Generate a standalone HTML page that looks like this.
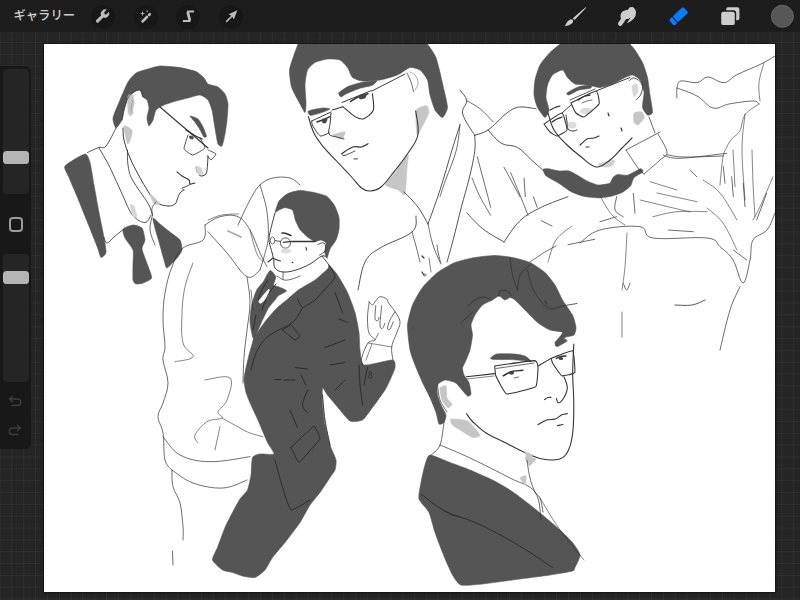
<!DOCTYPE html>
<html lang="ja">
<head>
<meta charset="utf-8">
<title>Procreate</title>
<style>
html,body{margin:0;padding:0;width:800px;height:600px;overflow:hidden;background:#232323;}
body{position:relative;font-family:"Liberation Sans","Noto Sans CJK JP",sans-serif;}
#bg{position:absolute;left:0;top:0;width:800px;height:600px;
 background-color:#232323;
 background-image:
  linear-gradient(to right, rgba(255,255,255,0.038) 1.2px, transparent 1.2px),
  linear-gradient(to bottom, rgba(255,255,255,0.038) 1.2px, transparent 1.2px),
  linear-gradient(to right, rgba(255,255,255,0.012) 1px, transparent 1px),
  linear-gradient(to bottom, rgba(255,255,255,0.012) 1px, transparent 1px);
 background-size:11.855px 11.855px,11.855px 11.855px,2.371px 2.371px,2.371px 2.371px;
 background-position:-0.4px 6.4px,-0.4px 6.4px,-0.4px 6.4px,-0.4px 6.4px;}
#topbar{position:absolute;left:0;top:0;width:800px;height:32px;background:#1d1d1d;}
#gallery{position:absolute;left:13.5px;top:0;height:32px;line-height:32px;color:#cfcfcf;font-size:12.3px;font-weight:500;letter-spacing:0px;}
.circ{position:absolute;top:4.5px;width:24px;height:24px;border-radius:50%;background:#171717;filter:blur(0.6px);}
.ico{position:absolute;top:0;}
#canvas{position:absolute;left:44px;top:44px;width:731px;height:548px;background:#fff;box-shadow:0 0 2px 1px rgba(0,0,0,0.55);}
#side{position:absolute;left:0;top:65.5px;width:31px;height:383.5px;background:#181818;border-radius:0 6px 6px 0;}
.track{position:absolute;left:2.5px;width:26.5px;background:#252525;border-radius:4px;}
.knob{position:absolute;left:2.5px;width:26px;height:12.5px;background:#b5b5b5;border-radius:3.5px;}
#sq{position:absolute;left:8.5px;top:217px;width:10.5px;height:10.5px;border:2px solid #9c9c9c;border-radius:4px;}
#art{position:absolute;left:0;top:0;width:800px;height:600px;}
</style>
</head>
<body>
<div id="bg"></div>
<div id="canvas"></div>
<svg id="art" viewBox="0 0 800 600">
<!--ART-->
<defs><clipPath id="cv"><rect x="44" y="44" width="731" height="548"/></clipPath></defs><g clip-path="url(#cv)">
<path d="M113.0 118.0C113.4 115.2 118.5 103.6 120.0 100.0C121.5 96.4 126.4 84.7 128.0 82.0C129.6 79.3 134.0 74.3 136.0 73.0C138.0 71.7 145.6 69.7 148.0 69.0C150.4 68.3 156.8 66.1 160.0 66.0C163.2 65.9 176.4 67.0 180.0 67.6C183.6 68.2 193.6 70.6 196.0 71.6C198.4 72.6 202.8 76.8 204.0 78.0C205.2 79.2 206.6 83.1 208.0 84.0C209.4 84.9 216.3 86.0 218.0 87.0C219.7 88.0 224.0 92.3 225.0 94.0C226.0 95.7 227.8 101.4 228.0 104.0C228.2 106.6 227.3 117.0 227.0 120.0C226.7 123.0 225.5 131.4 225.0 134.0C224.5 136.6 222.7 145.0 222.0 146.0C221.3 147.0 218.6 145.2 218.0 144.0C217.4 142.8 216.4 136.2 216.0 134.0C215.6 131.8 214.4 124.4 214.0 122.0C213.6 119.6 212.6 112.2 212.0 110.0C211.4 107.8 209.2 101.5 208.0 100.0C206.8 98.5 202.0 95.2 200.0 95.0C198.0 94.8 190.4 97.4 188.0 98.0C185.6 98.6 178.4 100.3 176.0 101.0C173.6 101.7 166.0 104.1 164.0 105.0C162.0 105.9 157.1 108.5 156.0 110.0C154.9 111.5 153.7 118.4 153.0 120.0C152.3 121.6 149.6 126.2 149.0 126.0C148.4 125.8 147.0 119.8 147.0 118.0C147.0 116.2 149.0 109.8 149.0 108.0C149.0 106.2 147.6 101.1 147.0 100.0C146.4 98.9 143.7 98.0 143.0 97.0C142.3 96.0 140.9 90.5 140.0 90.0C139.1 89.5 135.2 91.2 134.0 92.0C132.8 92.8 129.0 96.2 128.0 98.0C127.0 99.8 124.6 107.8 124.0 110.0C123.4 112.2 122.8 118.2 122.0 120.0C121.2 121.8 116.9 128.2 116.0 128.0C115.1 127.8 112.6 120.8 113.0 118.0Z" fill="#555555" stroke="#555555" stroke-width="0.6" stroke-linejoin="round" />
<path d="M190.0 116.0C190.4 115.8 196.7 117.9 198.0 119.0C199.3 120.1 202.2 125.3 203.0 127.0C203.8 128.7 206.4 135.0 206.5 136.0C206.6 137.0 204.8 137.8 204.0 137.0C203.2 136.2 200.0 129.6 199.0 128.0C198.0 126.4 194.9 122.2 194.0 121.0C193.1 119.8 189.6 116.2 190.0 116.0Z" fill="#555555" stroke="#555555" stroke-width="0.6" stroke-linejoin="round" />
<path d="M128.0 96.0C128.5 94.3 132.4 94.2 133.0 95.0C133.6 95.8 134.2 101.9 134.0 104.0C133.8 106.1 131.6 115.2 131.0 116.0C130.4 116.8 128.3 114.0 128.0 112.0C127.7 110.0 127.5 97.7 128.0 96.0Z" fill="#c6c6c6" stroke="#c6c6c6" stroke-width="0.6" stroke-linejoin="round" />
<path d="M124.0 126.0C124.5 124.6 131.3 128.8 132.0 130.0C132.7 131.2 131.4 136.6 131.0 138.0C130.6 139.4 128.2 145.2 127.5 144.0C126.8 142.8 123.5 127.4 124.0 126.0Z" fill="#c6c6c6" stroke="#c6c6c6" stroke-width="0.6" stroke-linejoin="round" />
<path d="M65.0 166.0C66.6 163.7 82.5 154.3 85.0 154.0C87.5 153.7 89.1 159.4 90.0 162.5C90.9 165.6 93.1 180.0 94.0 185.0C94.9 190.0 98.0 207.2 99.0 212.5C100.0 217.8 103.3 233.5 104.0 237.5C104.7 241.5 106.3 250.5 106.0 252.5C105.7 254.5 101.8 258.0 101.0 257.5C100.2 257.0 98.8 251.0 97.5 247.5C96.2 244.0 89.5 227.5 87.5 222.5C85.5 217.5 79.3 202.0 77.5 197.5C75.7 193.0 70.2 180.7 69.0 177.5C67.8 174.3 63.4 168.3 65.0 166.0Z" fill="#555555" stroke="#555555" stroke-width="0.6" stroke-linejoin="round" />
<path d="M123.0 229.0C123.8 227.7 131.1 225.1 133.0 225.0C134.9 224.9 140.8 226.5 142.0 228.0C143.2 229.5 145.0 237.9 145.0 240.0C145.0 242.1 141.7 246.4 142.0 249.0C142.3 251.6 147.0 263.1 148.0 266.0C149.0 268.9 152.1 276.3 151.6 278.0C151.1 279.7 144.6 282.4 143.0 283.0C141.4 283.6 137.0 284.3 136.0 284.0C135.0 283.7 133.3 282.0 133.0 280.0C132.7 278.0 133.0 267.0 133.0 264.0C133.0 261.0 133.8 252.6 133.0 250.0C132.2 247.4 126.0 240.1 125.0 238.0C124.0 235.9 122.2 230.3 123.0 229.0Z" fill="#555555" stroke="#555555" stroke-width="0.6" stroke-linejoin="round" />
<path d="M153.0 218.0C153.5 217.6 158.3 222.6 160.0 224.0C161.7 225.4 168.0 230.4 170.0 232.0C172.0 233.6 178.8 238.2 180.0 240.0C181.2 241.8 182.3 248.2 182.0 250.0C181.7 251.8 178.5 256.2 177.0 258.0C175.5 259.8 168.3 267.8 167.0 268.0C165.7 268.2 164.8 262.6 164.0 260.0C163.2 257.4 159.9 245.2 159.0 242.0C158.1 238.8 155.6 230.4 155.0 228.0C154.4 225.6 152.5 218.4 153.0 218.0Z" fill="#555555" stroke="#555555" stroke-width="0.6" stroke-linejoin="round" />
<path d="M160.0 107.0 L208.0 148.0" fill="none" stroke="#333333" stroke-width="1.08" stroke-linecap="round" stroke-linejoin="round"/>
<path d="M188.0 135.0C187.7 135.9 183.7 147.7 184.0 149.0C184.3 150.3 191.6 155.1 193.0 155.0C194.4 154.9 204.5 149.1 205.0 148.0C205.5 146.9 200.3 138.7 200.0 138.0" fill="none" stroke="#333333" stroke-width="0.84" stroke-linecap="round" stroke-linejoin="round"/>
<path d="M208.0 150.0C208.5 150.3 215.8 153.3 216.0 154.0C216.2 154.7 211.6 159.9 211.0 160.0C210.4 160.1 207.8 156.3 207.6 156.0" fill="none" stroke="#333333" stroke-width="0.84" stroke-linecap="round" stroke-linejoin="round"/>
<path d="M186.0 130.0C187.5 130.9 191.1 133.3 194.0 135.0C196.9 136.7 200.5 138.3 202.0 139.0" fill="none" stroke="#333333" stroke-width="1.32" stroke-linecap="round" stroke-linejoin="round"/>
<path d="M189.5 136.0C189.8 135.8 192.7 136.2 193.0 136.5C193.3 136.8 193.3 138.8 193.0 139.0C192.7 139.2 190.3 138.8 190.0 138.5C189.7 138.2 189.2 136.2 189.5 136.0Z" fill="#444" stroke="#444" stroke-width="0.6" stroke-linejoin="round" />
<path d="M208.0 156.0C207.9 157.7 207.7 162.4 207.5 165.0C207.3 167.6 207.3 168.3 207.0 170.0C206.7 171.7 206.9 172.9 206.0 174.0C205.1 175.1 203.3 175.8 202.0 176.0C200.7 176.2 199.6 175.2 199.0 175.0" fill="none" stroke="#333333" stroke-width="0.96" stroke-linecap="round" stroke-linejoin="round"/>
<path d="M196.0 167.0 L197.0 172.0" fill="none" stroke="#333333" stroke-width="0.72" stroke-linecap="round" stroke-linejoin="round"/>
<path d="M196.0 166.0C196.3 165.4 200.3 167.2 201.0 168.0C201.7 168.8 203.3 173.4 203.0 174.0C202.7 174.6 198.7 174.8 198.0 174.0C197.3 173.2 195.7 166.6 196.0 166.0Z" fill="#d2d2d2" stroke="#d2d2d2" stroke-width="0.6" stroke-linejoin="round" />
<path d="M177.0 172.0C177.9 172.7 179.8 174.5 182.0 176.0C184.2 177.5 187.5 178.5 189.0 180.0C190.5 181.5 188.9 183.4 190.0 184.0C191.1 184.6 194.1 183.2 195.0 183.0" fill="none" stroke="#333333" stroke-width="1.08" stroke-linecap="round" stroke-linejoin="round"/>
<path d="M190.0 184.5C189.1 185.0 186.5 186.4 185.0 187.0C183.5 187.6 182.2 187.4 182.0 188.0C181.8 188.6 183.6 189.6 184.0 190.0" fill="none" stroke="#333333" stroke-width="0.84" stroke-linecap="round" stroke-linejoin="round"/>
<path d="M184.0 190.0C183.3 190.6 181.3 191.2 180.0 193.0C178.7 194.8 177.9 198.0 177.0 200.0C176.1 202.0 176.7 202.9 175.0 204.0C173.3 205.1 171.5 206.4 168.0 206.0C164.5 205.6 160.0 205.3 156.0 202.0C152.0 198.7 149.3 193.1 146.0 188.0C142.7 182.9 140.9 179.5 138.0 174.0C135.1 168.5 132.6 164.2 130.0 158.0C127.4 151.8 125.3 145.5 124.0 140.0C122.7 134.5 123.2 130.2 123.0 128.0" fill="none" stroke="#333333" stroke-width="0.96" stroke-linecap="round" stroke-linejoin="round"/>
<path d="M150.0 194.0C150.6 194.0 159.6 202.6 160.0 203.5C160.4 204.4 155.0 204.4 154.0 203.5C153.0 202.6 149.4 194.0 150.0 194.0Z" fill="#c6c6c6" stroke="#c6c6c6" stroke-width="0.6" stroke-linejoin="round" />
<path d="M116.0 128.0C114.2 131.3 109.2 142.4 106.0 146.0C102.8 149.6 102.1 146.3 98.8 147.5C95.4 148.7 89.6 151.6 87.5 152.5" fill="none" stroke="#333333" stroke-width="0.84" stroke-linecap="round" stroke-linejoin="round"/>
<path d="M98.8 147.5C100.8 151.2 105.6 158.8 110.0 167.5C114.4 176.2 118.4 186.3 122.5 195.0C126.6 203.7 128.4 210.0 132.5 215.0C136.6 220.0 141.6 222.5 145.0 222.5C148.4 222.5 149.9 216.4 151.0 215.0" fill="none" stroke="#333333" stroke-width="0.84" stroke-linecap="round" stroke-linejoin="round"/>
<path d="M104.0 237.5C104.5 238.5 105.2 243.1 107.0 243.0C108.8 242.9 111.2 239.4 114.0 237.0C116.8 234.6 120.9 231.3 122.5 230.0" fill="none" stroke="#333333" stroke-width="0.84" stroke-linecap="round" stroke-linejoin="round"/>
<path d="M127.5 150.0C127.6 152.8 127.1 159.5 128.0 165.0C128.9 170.5 128.9 173.1 132.5 180.0C136.1 186.9 143.8 196.1 147.5 202.5C151.2 208.9 151.6 212.7 152.5 215.0" fill="none" stroke="#333333" stroke-width="0.84" stroke-linecap="round" stroke-linejoin="round"/>
<path d="M152.5 215.0C152.0 217.8 149.5 224.5 150.0 230.0C150.5 235.5 154.1 242.2 155.0 245.0" fill="none" stroke="#333333" stroke-width="0.72" stroke-linecap="round" stroke-linejoin="round"/>
<path d="M156.0 202.0C155.3 203.1 152.6 205.6 152.0 208.0C151.4 210.4 152.4 213.7 152.5 215.0" fill="none" stroke="#333333" stroke-width="0.72" stroke-linecap="round" stroke-linejoin="round"/>
<path d="M130.0 205.0C130.1 204.0 133.3 204.8 134.0 206.0C134.7 207.2 137.1 216.0 137.0 217.0C136.9 218.0 133.7 217.2 133.0 216.0C132.3 214.8 129.9 206.0 130.0 205.0Z" fill="#d6d6d6" stroke="#d6d6d6" stroke-width="0.6" stroke-linejoin="round" />
<path d="M122.0 120.0C122.4 118.2 122.9 114.0 124.0 110.0C125.1 106.0 126.2 101.3 128.0 98.0C129.8 94.7 131.8 93.5 134.0 92.0C136.2 90.5 138.3 89.1 140.0 90.0C141.7 90.9 142.4 95.7 143.0 97.0" fill="none" stroke="#333333" stroke-width="0.72" stroke-linecap="round" stroke-linejoin="round"/>
<path d="M133.0 100.0C132.6 101.5 131.0 105.4 131.0 108.0C131.0 110.6 132.6 112.9 133.0 114.0" fill="none" stroke="#888" stroke-width="0.6" stroke-linecap="round" stroke-linejoin="round"/>
<path d="M228.0 231.0 L241.0 237.0" fill="none" stroke="#aaa" stroke-width="1.92" stroke-linecap="round" stroke-linejoin="round"/>
<path d="M275.2 212.2C275.2 211.3 277.7 202.9 279.0 201.0C280.3 199.1 285.9 194.6 288.0 193.5C290.1 192.4 297.3 190.6 300.0 190.5C302.7 190.4 312.3 192.1 315.0 192.7C317.7 193.3 325.1 195.2 327.0 196.5C328.9 197.8 333.3 203.4 334.5 205.5C335.7 207.6 338.6 215.1 339.0 217.5C339.4 219.9 339.3 227.2 339.0 229.5C338.7 231.8 336.9 238.1 336.0 240.0C335.1 241.9 330.9 247.2 330.0 249.0C329.1 250.8 327.5 257.7 327.0 258.0C326.5 258.3 324.8 253.5 324.7 252.0C324.6 250.5 326.4 244.2 326.0 243.0C325.6 241.8 322.1 240.2 321.0 240.0C319.9 239.8 316.4 241.8 315.0 241.5C313.6 241.2 309.0 238.2 307.5 237.0C306.0 235.8 301.2 231.2 300.0 229.5C298.8 227.8 296.2 222.4 295.5 220.5C294.8 218.6 293.6 211.3 292.5 210.0C291.4 208.7 286.4 207.7 285.0 207.7C283.6 207.7 280.0 209.6 279.0 210.0C278.0 210.4 275.2 213.1 275.2 212.2Z" fill="#555555" stroke="#555555" stroke-width="0.6" stroke-linejoin="round" />
<path d="M329.0 265.0C329.9 265.6 335.6 272.2 337.5 275.0C339.4 277.8 345.8 288.8 347.5 292.5C349.2 296.2 353.9 308.5 355.0 312.5C356.1 316.5 358.5 328.8 359.0 332.5C359.5 336.2 359.5 346.8 360.0 350.0C360.5 353.2 360.8 364.0 364.0 365.0C367.2 366.0 389.4 359.8 392.5 360.0C395.6 360.2 395.2 365.5 395.0 367.5C394.8 369.5 391.0 377.8 390.0 380.0C389.0 382.2 386.8 387.2 385.0 390.0C383.2 392.8 374.8 404.5 372.5 407.5C370.2 410.5 364.8 418.6 362.5 420.0C360.2 421.4 352.2 422.0 350.0 421.0C347.8 420.0 342.2 412.6 340.0 410.0C337.8 407.4 329.2 397.2 327.5 395.0C325.8 392.8 323.0 387.0 322.5 388.0C322.0 389.0 322.2 401.3 322.5 405.0C322.8 408.7 324.2 421.0 325.0 425.0C325.8 429.0 328.9 441.5 330.0 445.0C331.1 448.5 335.5 457.5 336.0 460.0C336.5 462.5 335.6 468.2 335.0 470.0C334.4 471.8 331.5 475.2 330.0 477.5C328.5 479.8 322.0 489.8 320.0 492.5C318.0 495.2 312.0 502.0 310.0 505.0C308.0 508.0 302.5 518.8 300.0 522.5C297.5 526.2 287.8 539.0 285.0 542.5C282.2 546.0 274.5 554.8 272.5 557.5C270.5 560.2 266.8 568.0 265.0 570.0C263.2 572.0 257.2 576.9 255.0 577.5C252.8 578.1 244.8 576.5 242.5 576.0C240.2 575.5 234.5 573.1 232.5 572.5C230.5 571.9 224.5 571.2 222.5 570.0C220.5 568.8 213.0 562.2 212.5 560.0C212.0 557.8 216.2 550.8 217.5 547.5C218.8 544.2 223.5 531.0 225.0 527.5C226.5 524.0 231.0 515.4 232.5 512.5C234.0 509.6 238.5 501.2 240.0 499.0C241.5 496.8 246.4 492.4 247.5 490.0C248.6 487.6 250.5 478.2 251.0 475.0C251.5 471.8 251.6 459.6 252.5 457.5C253.4 455.4 257.9 454.4 260.0 454.0C262.1 453.6 273.2 455.1 274.0 454.0C274.8 452.9 269.0 445.6 267.5 442.5C266.0 439.4 260.6 426.2 259.0 422.5C257.4 418.8 252.3 408.0 251.0 405.0C249.7 402.0 246.7 395.0 246.0 392.5C245.3 390.0 244.1 382.0 244.0 380.0C243.9 378.0 244.5 375.0 245.0 372.5C245.5 370.0 248.2 358.0 249.0 355.0C249.8 352.0 251.9 344.8 252.5 342.5C253.1 340.2 254.6 333.4 255.0 332.5C255.4 331.6 255.7 334.4 256.7 333.3C257.7 332.2 263.0 324.2 265.0 321.7C267.0 319.2 274.5 310.5 276.7 308.3C278.9 306.1 284.5 301.8 286.7 300.0C288.9 298.2 295.5 292.0 298.3 290.0C301.1 288.0 312.0 282.1 315.0 280.0C318.0 277.9 326.6 270.0 328.0 268.5C329.4 267.0 328.1 264.4 329.0 265.0Z" fill="#555555" stroke="#555555" stroke-width="0.6" stroke-linejoin="round" />
<path d="M270.0 270.5C271.2 270.0 275.4 275.2 275.8 276.7C276.2 278.1 273.2 284.0 273.5 285.0C273.8 286.0 277.0 286.1 278.3 286.7C279.6 287.3 286.7 289.9 286.7 290.8C286.7 291.7 279.5 294.9 278.3 295.8C277.1 296.7 276.0 298.8 275.0 300.0C274.0 301.2 269.6 306.1 268.3 308.3C267.0 310.5 262.9 319.2 261.7 321.7C260.5 324.2 257.6 331.7 256.7 333.3C255.8 334.9 253.7 339.2 253.0 338.0C252.3 336.8 250.1 325.0 250.0 321.7C249.9 318.4 251.0 308.2 251.7 305.0C252.4 301.8 255.5 292.3 256.7 290.0C257.9 287.7 262.0 283.6 263.3 281.7C264.6 279.8 268.8 271.0 270.0 270.5Z" fill="#555555" stroke="#555555" stroke-width="0.6" stroke-linejoin="round" />
<path d="M259.0 300.8C259.8 299.4 268.1 289.4 269.0 289.0C269.9 288.6 268.3 295.3 267.5 296.7C266.7 298.1 261.7 302.9 260.8 303.3C259.9 303.7 258.2 302.2 259.0 300.8Z" fill="#fff" stroke="#fff" stroke-width="0.6" stroke-linejoin="round" />
<path d="M329.0 265.0C329.4 265.8 335.9 275.2 335.0 277.5C334.1 279.8 317.2 298.0 315.0 300.0C312.8 302.0 303.7 307.6 302.5 307.5C301.3 307.4 297.8 299.6 297.5 299.0" fill="none" stroke="#2c2c2c" stroke-width="0.96" stroke-linecap="round" stroke-linejoin="round"/>
<path d="M302.5 307.5C300.7 310.2 298.5 317.5 292.5 322.5C286.5 327.5 276.4 330.0 270.0 335.0C263.6 340.0 261.0 343.6 257.5 350.0C254.0 356.4 252.2 366.3 251.0 370.0" fill="none" stroke="#2c2c2c" stroke-width="0.96" stroke-linecap="round" stroke-linejoin="round"/>
<path d="M282.5 330.0C282.8 329.8 290.4 324.8 291.0 325.0C291.6 325.2 299.9 335.5 300.0 336.0C300.1 336.5 295.6 340.2 295.0 340.0C294.4 339.8 282.9 330.3 282.5 330.0" fill="none" stroke="#2c2c2c" stroke-width="0.96" stroke-linecap="round" stroke-linejoin="round"/>
<path d="M335.0 292.5 L342.5 312.5" fill="none" stroke="#2c2c2c" stroke-width="0.96" stroke-linecap="round" stroke-linejoin="round"/>
<path d="M339.0 319.0 L347.5 322.5" fill="none" stroke="#2c2c2c" stroke-width="0.96" stroke-linecap="round" stroke-linejoin="round"/>
<path d="M325.0 347.5 L345.0 340.0" fill="none" stroke="#2c2c2c" stroke-width="0.96" stroke-linecap="round" stroke-linejoin="round"/>
<path d="M330.0 365.0 L345.0 362.5" fill="none" stroke="#2c2c2c" stroke-width="0.96" stroke-linecap="round" stroke-linejoin="round"/>
<path d="M295.0 367.5 L307.5 369.0" fill="none" stroke="#2c2c2c" stroke-width="0.96" stroke-linecap="round" stroke-linejoin="round"/>
<path d="M301.0 375.0 L306.0 385.0" fill="none" stroke="#2c2c2c" stroke-width="0.96" stroke-linecap="round" stroke-linejoin="round"/>
<path d="M275.0 379.5 L281.0 379.5" fill="none" stroke="#2c2c2c" stroke-width="1.08" stroke-linecap="round" stroke-linejoin="round"/>
<path d="M284.0 380.0 L295.0 380.0" fill="none" stroke="#2c2c2c" stroke-width="1.08" stroke-linecap="round" stroke-linejoin="round"/>
<path d="M359.0 365.0 L360.0 385.0" fill="none" stroke="#2c2c2c" stroke-width="0.96" stroke-linecap="round" stroke-linejoin="round"/>
<path d="M367.5 367.5 L364.0 385.0" fill="none" stroke="#2c2c2c" stroke-width="0.96" stroke-linecap="round" stroke-linejoin="round"/>
<ellipse cx="370.3" cy="373" rx="1.4" ry="1.4" fill="none" stroke="#2c2c2c" stroke-width="0.7"/>
<ellipse cx="370.3" cy="376.5" rx="1.7" ry="1.9" fill="none" stroke="#2c2c2c" stroke-width="0.7"/>
<path d="M307.5 390.0C306.6 392.8 302.5 400.9 302.5 405.0C302.5 409.1 306.6 411.1 307.5 412.5" fill="none" stroke="#2c2c2c" stroke-width="0.96" stroke-linecap="round" stroke-linejoin="round"/>
<path d="M290.0 410.0 L297.5 427.5" fill="none" stroke="#2c2c2c" stroke-width="0.96" stroke-linecap="round" stroke-linejoin="round"/>
<path d="M291.0 447.5C291.8 446.8 313.0 426.3 314.0 426.0C315.0 425.7 320.5 437.8 320.0 439.0C319.5 440.2 300.0 462.2 299.0 462.5C298.0 462.8 291.3 448.0 291.0 447.5" fill="none" stroke="#2c2c2c" stroke-width="0.96" stroke-linecap="round" stroke-linejoin="round"/>
<path d="M275.0 460.0C275.5 461.8 281.4 484.2 282.5 487.5C283.6 490.8 289.2 509.2 291.0 510.0C292.8 510.8 308.7 500.7 310.0 500.0" fill="none" stroke="#2c2c2c" stroke-width="0.96" stroke-linecap="round" stroke-linejoin="round"/>
<path d="M322.5 395.0C323.0 399.6 323.6 410.8 325.0 420.0C326.4 429.2 329.1 440.4 330.0 445.0" fill="none" stroke="#2c2c2c" stroke-width="0.96" stroke-linecap="round" stroke-linejoin="round"/>
<path d="M335.0 390.0 L345.0 380.0" fill="none" stroke="#2c2c2c" stroke-width="0.96" stroke-linecap="round" stroke-linejoin="round"/>
<path d="M360.0 385.0 L362.5 405.0" fill="none" stroke="#2c2c2c" stroke-width="0.96" stroke-linecap="round" stroke-linejoin="round"/>
<path d="M258.0 300.0C258.7 298.2 260.2 293.7 262.0 290.0C263.8 286.3 266.9 281.8 268.0 280.0" fill="none" stroke="#2c2c2c" stroke-width="0.96" stroke-linecap="round" stroke-linejoin="round"/>
<path d="M253.0 330.0 L256.0 315.0" fill="none" stroke="#2c2c2c" stroke-width="0.96" stroke-linecap="round" stroke-linejoin="round"/>
<path d="M262.0 310.0C263.1 307.2 265.4 299.8 268.0 295.0C270.6 290.2 274.5 286.0 276.0 284.0" fill="none" stroke="#2c2c2c" stroke-width="0.96" stroke-linecap="round" stroke-linejoin="round"/>
<path d="M291.0 241.5 L315.0 241.5" fill="none" stroke="#333333" stroke-width="1.44" stroke-linecap="round" stroke-linejoin="round"/>
<ellipse cx="285.5" cy="243" rx="5" ry="5.2" fill="none" stroke="#333333" stroke-width="0.8"/>
<ellipse cx="272.5" cy="240.5" rx="2.2" ry="3.6" fill="none" stroke="#333333" stroke-width="0.7"/>
<path d="M275.0 240.5 L280.5 241.5" fill="none" stroke="#333333" stroke-width="0.84" stroke-linecap="round" stroke-linejoin="round"/>
<path d="M282.0 233.0C282.7 233.1 284.4 233.0 286.0 233.5C287.6 234.0 290.1 235.1 291.0 235.5" fill="none" stroke="#333333" stroke-width="1.56" stroke-linecap="round" stroke-linejoin="round"/>
<path d="M283.5 242.3 L289.5 241.7" fill="none" stroke="#333333" stroke-width="1.32" stroke-linecap="round" stroke-linejoin="round"/>
<ellipse cx="286" cy="251" rx="5" ry="2.4" fill="#dedede"/>
<path d="M306.0 247.5 L306.5 250.0" fill="none" stroke="#333333" stroke-width="1.2" stroke-linecap="round" stroke-linejoin="round"/>
<circle cx="292.5" cy="262.5" r="0.8" fill="#333333"/>
<path d="M273.7 258.5C274.3 258.8 275.8 259.5 277.0 260.0C278.2 260.5 279.9 260.8 280.5 261.0" fill="none" stroke="#333333" stroke-width="1.08" stroke-linecap="round" stroke-linejoin="round"/>
<path d="M268.0 262.0 L273.0 258.0" fill="none" stroke="#333333" stroke-width="1.08" stroke-linecap="round" stroke-linejoin="round"/>
<path d="M318.0 244.5C319.1 244.2 322.6 241.9 324.0 243.0C325.4 244.1 326.3 248.3 325.5 250.5C324.7 252.7 320.6 254.2 319.5 255.0" fill="none" stroke="#333333" stroke-width="0.84" stroke-linecap="round" stroke-linejoin="round"/>
<path d="M275.0 213.0C274.2 216.0 271.8 224.6 270.7 229.5C269.6 234.4 268.9 236.2 269.0 240.0C269.1 243.8 270.6 246.9 271.5 250.5C272.4 254.1 273.1 256.3 273.7 259.5C274.3 262.7 273.3 265.7 275.0 268.0C276.7 270.3 279.1 271.6 283.0 272.0C286.9 272.4 291.1 271.5 296.0 270.0C300.9 268.5 305.2 266.6 310.0 264.0C314.8 261.4 318.9 257.1 322.0 256.0C325.1 254.9 326.1 257.6 327.0 258.0" fill="none" stroke="#333333" stroke-width="0.96" stroke-linecap="round" stroke-linejoin="round"/>
<path d="M283.0 272.0 L283.0 279.0" fill="none" stroke="#333333" stroke-width="0.72" stroke-linecap="round" stroke-linejoin="round"/>
<path d="M322.0 256.0 L329.0 265.0" fill="none" stroke="#333333" stroke-width="0.84" stroke-linecap="round" stroke-linejoin="round"/>
<path d="M277.0 276.0C278.3 276.7 281.2 279.4 284.0 280.0C286.8 280.6 289.1 279.7 292.0 279.0C294.9 278.3 298.5 276.6 300.0 276.0" fill="none" stroke="#333333" stroke-width="0.72" stroke-linecap="round" stroke-linejoin="round"/>
<path d="M238.0 225.0C240.2 220.4 246.0 207.3 250.0 200.0C254.0 192.7 255.8 189.0 260.0 185.0C264.2 181.0 267.5 179.3 273.0 178.0C278.5 176.7 285.1 176.7 290.0 178.0C294.9 179.3 298.2 183.7 300.0 185.0" fill="none" stroke="#333333" stroke-width="0.72" stroke-linecap="round" stroke-linejoin="round"/>
<path d="M205.0 225.0C207.8 223.5 213.9 218.2 220.0 216.7C226.1 215.2 232.5 214.3 238.0 216.7C243.5 219.1 246.0 223.3 250.0 230.0C254.0 236.7 256.9 246.3 260.0 253.0C263.1 259.7 265.7 264.2 267.0 266.7" fill="none" stroke="#333333" stroke-width="0.72" stroke-linecap="round" stroke-linejoin="round"/>
<path d="M205.0 225.0C204.6 227.8 207.0 235.8 203.0 240.0C199.0 244.2 188.7 243.1 183.0 248.0C177.3 252.9 175.3 258.4 172.0 266.7C168.7 274.9 166.7 283.2 165.0 293.0C163.3 302.8 163.0 310.2 163.0 320.0C163.0 329.8 165.0 339.4 165.0 346.7C165.0 354.0 162.4 353.3 163.0 360.0C163.6 366.7 168.0 375.1 168.0 383.0C168.0 390.9 164.8 396.8 163.0 403.0C161.2 409.2 158.0 411.2 158.0 416.7C158.0 422.2 161.7 425.1 163.0 433.0C164.3 440.9 163.3 453.2 165.0 460.0C166.7 466.8 170.7 468.2 172.0 470.0" fill="none" stroke="#333333" stroke-width="0.72" stroke-linecap="round" stroke-linejoin="round"/>
<path d="M208.0 231.7C211.5 235.6 219.8 244.8 227.0 253.0C234.2 261.2 240.9 273.6 247.0 276.7C253.1 279.8 257.6 271.2 260.0 270.0" fill="none" stroke="#333333" stroke-width="0.72" stroke-linecap="round" stroke-linejoin="round"/>
<path d="M193.0 263.0C191.5 267.3 187.0 277.5 185.0 286.7C183.0 295.9 182.4 302.7 182.0 313.0C181.6 323.3 181.0 335.0 183.0 343.0C185.0 351.0 194.5 353.3 193.0 356.7C191.5 360.1 178.3 360.8 175.0 361.7" fill="none" stroke="#333333" stroke-width="0.6" stroke-linecap="round" stroke-linejoin="round"/>
<path d="M163.0 436.7C166.1 440.1 171.4 450.4 180.0 455.0C188.6 459.6 197.2 461.4 210.0 461.7C222.8 462.0 242.7 457.6 250.0 456.7" fill="none" stroke="#333333" stroke-width="0.72" stroke-linecap="round" stroke-linejoin="round"/>
<path d="M172.0 470.0C175.8 472.4 183.7 479.7 193.0 483.0C202.3 486.3 213.1 488.6 223.0 488.0C232.9 487.4 242.6 481.5 247.0 480.0" fill="none" stroke="#333333" stroke-width="0.72" stroke-linecap="round" stroke-linejoin="round"/>
<path d="M172.0 470.0C172.2 473.1 171.5 480.6 173.0 486.7C174.5 492.8 178.2 495.7 180.0 503.0C181.8 510.3 182.4 519.9 183.0 526.7C183.6 533.5 183.0 537.6 183.0 540.0" fill="none" stroke="#333333" stroke-width="0.72" stroke-linecap="round" stroke-linejoin="round"/>
<path d="M205.0 380.0C209.6 379.6 226.0 374.3 230.0 378.0C234.0 381.7 229.2 393.8 227.0 400.0C224.8 406.2 218.9 408.4 218.0 411.7C217.1 415.0 224.0 416.2 222.0 418.0C220.0 419.8 211.9 418.6 207.0 421.7C202.1 424.8 196.7 431.1 195.0 435.0C193.3 438.9 197.4 441.5 198.0 443.0" fill="none" stroke="#333333" stroke-width="0.6" stroke-linecap="round" stroke-linejoin="round"/>
<path d="M222.0 418.0C225.3 419.8 234.9 425.2 240.0 428.0C245.1 430.8 245.8 431.4 250.0 433.0C254.2 434.6 260.6 436.0 263.0 436.7" fill="none" stroke="#333333" stroke-width="0.6" stroke-linecap="round" stroke-linejoin="round"/>
<path d="M220.0 426.7 L215.0 450.0" fill="none" stroke="#333333" stroke-width="0.6" stroke-linecap="round" stroke-linejoin="round"/>
<path d="M172.5 551.0 L173.0 565.0" fill="none" stroke="#333333" stroke-width="0.72" stroke-linecap="round" stroke-linejoin="round"/>
<path d="M260.0 185.0C261.2 189.6 265.2 200.5 266.7 210.0C268.2 219.5 268.6 228.8 268.3 236.7C268.0 244.6 266.5 247.2 265.0 253.3C263.5 259.4 260.9 266.9 260.0 270.0" fill="none" stroke="#333333" stroke-width="0.72" stroke-linecap="round" stroke-linejoin="round"/>
<path d="M250.0 230.0C251.2 234.3 254.3 247.5 256.7 253.3C259.1 259.1 262.1 260.2 263.3 261.7" fill="none" stroke="#333333" stroke-width="0.6" stroke-linecap="round" stroke-linejoin="round"/>
<path d="M208.3 220.0C210.8 219.1 216.2 216.1 221.7 215.0C227.2 213.9 235.3 214.2 238.3 214.0" fill="none" stroke="#333333" stroke-width="0.6" stroke-linecap="round" stroke-linejoin="round"/>
<path d="M247.0 277.0C247.6 281.8 250.0 293.3 250.0 303.0C250.0 312.7 248.1 320.1 247.0 330.0C245.9 339.9 244.7 347.3 244.0 357.0C243.3 366.7 243.2 378.2 243.0 383.0" fill="none" stroke="#333333" stroke-width="0.72" stroke-linecap="round" stroke-linejoin="round"/>
<path d="M251.0 290.0 L253.0 310.0" fill="none" stroke="#333333" stroke-width="0.6" stroke-linecap="round" stroke-linejoin="round"/>
<path d="M369.2 301.7C369.8 302.3 371.3 305.2 372.5 305.0C373.7 304.8 374.4 302.3 375.8 300.8C377.2 299.3 378.0 297.0 380.0 296.7C382.0 296.4 385.2 297.9 386.7 299.0C388.2 300.1 386.8 300.2 388.3 302.5C389.8 304.8 392.9 308.2 395.0 311.7C397.1 315.2 399.7 317.8 400.0 321.7C400.3 325.6 398.2 328.4 396.7 333.0C395.2 337.6 392.4 341.8 391.7 346.7C391.0 351.6 392.8 357.6 393.0 360.0" fill="none" stroke="#333333" stroke-width="0.72" stroke-linecap="round" stroke-linejoin="round"/>
<path d="M375.8 305.8C375.7 308.1 374.7 315.6 375.0 318.3C375.3 321.1 376.8 320.9 377.5 320.8C378.2 320.7 378.7 318.1 379.0 317.5" fill="none" stroke="#333333" stroke-width="0.72" stroke-linecap="round" stroke-linejoin="round"/>
<path d="M381.7 305.8C381.4 309.3 379.9 320.9 380.0 325.0C380.1 329.1 381.6 328.6 382.5 328.3C383.4 328.0 384.5 324.2 385.0 323.3" fill="none" stroke="#333333" stroke-width="0.72" stroke-linecap="round" stroke-linejoin="round"/>
<path d="M395.0 311.7C394.1 313.2 391.4 317.0 390.0 320.0C388.6 323.0 387.5 326.7 387.5 328.3C387.5 329.9 388.9 330.2 390.0 329.0C391.1 327.8 392.7 323.0 393.3 321.7" fill="none" stroke="#333333" stroke-width="0.72" stroke-linecap="round" stroke-linejoin="round"/>
<path d="M369.2 301.7C368.9 304.7 367.5 312.3 367.5 318.0C367.5 323.7 367.6 329.0 369.0 333.0C370.4 337.0 375.2 338.2 375.0 340.0C374.8 341.8 370.4 339.7 368.0 343.0C365.6 346.3 362.6 354.0 361.7 358.0C360.8 362.0 362.8 363.7 363.0 365.0" fill="none" stroke="#333333" stroke-width="0.72" stroke-linecap="round" stroke-linejoin="round"/>
<path d="M375.0 340.0 L378.3 333.3" fill="none" stroke="#333333" stroke-width="0.6" stroke-linecap="round" stroke-linejoin="round"/>
<path d="M368.0 343.0 L392.0 347.0" fill="none" stroke="#333333" stroke-width="0.6" stroke-linecap="round" stroke-linejoin="round"/>
<path d="M372.0 344.0 L366.0 360.0" fill="none" stroke="#333333" stroke-width="0.6" stroke-linecap="round" stroke-linejoin="round"/>
<path d="M301.0 36.0C288.2 36.8 298.7 42.1 298.0 44.0C297.3 45.9 294.9 52.4 294.0 55.0C293.1 57.6 289.8 66.8 289.5 70.0C289.2 73.2 290.6 83.8 291.5 87.0C292.4 90.2 297.6 99.5 299.0 102.0C300.4 104.5 304.3 112.5 305.0 112.5C305.7 112.5 306.0 105.2 306.0 102.5C306.0 99.8 304.9 88.2 305.0 85.0C305.1 81.8 306.5 72.2 307.5 70.0C308.5 67.8 313.0 63.6 315.0 62.5C317.0 61.4 325.0 59.2 327.5 59.0C330.0 58.8 338.0 59.1 340.0 60.0C342.0 60.9 346.2 65.8 347.5 67.5C348.8 69.2 351.0 76.2 352.5 77.5C354.0 78.8 359.8 80.8 362.5 81.0C365.2 81.2 376.5 80.6 380.0 80.0C383.5 79.4 394.5 76.2 397.5 75.0C400.5 73.8 407.8 68.0 410.0 67.5C412.2 67.0 418.2 68.8 420.0 70.0C421.8 71.2 426.5 77.5 427.5 80.0C428.5 82.5 429.2 92.0 430.0 95.0C430.8 98.0 433.8 107.8 435.0 110.0C436.2 112.2 441.2 117.8 442.5 117.5C443.8 117.2 447.4 110.2 447.5 107.5C447.6 104.8 444.8 93.5 444.0 90.0C443.2 86.5 440.8 75.8 440.0 72.5C439.2 69.2 437.0 60.0 436.0 57.5C435.0 55.0 430.9 48.9 430.0 47.5C429.1 46.1 427.9 45.1 427.5 44.0C427.1 42.9 438.6 36.8 426.0 36.0C413.4 35.2 313.8 35.2 301.0 36.0Z" fill="#555555" stroke="#555555" stroke-width="0.6" stroke-linejoin="round" />
<path d="M338.8 92.8C339.6 91.7 346.0 87.4 348.5 86.3C351.0 85.2 360.9 82.5 363.7 82.0C366.5 81.5 375.8 80.5 376.7 80.8C377.6 81.1 374.1 84.4 372.4 85.2C370.7 86.0 362.0 87.5 359.4 88.4C356.8 89.3 348.1 92.9 346.3 93.8C344.5 94.7 341.8 97.1 341.0 97.0C340.2 96.9 338.1 93.9 338.8 92.8Z" fill="#555555" stroke="#555555" stroke-width="0.6" stroke-linejoin="round" />
<path d="M308.4 111.0C309.6 110.2 320.3 108.2 322.5 108.0C324.7 107.8 330.0 108.6 330.0 109.0C330.0 109.4 324.4 111.6 322.5 112.3C320.6 113.0 312.0 115.6 310.6 115.5C309.2 115.4 307.2 111.8 308.4 111.0Z" fill="#555555" stroke="#555555" stroke-width="0.6" stroke-linejoin="round" />
<path d="M416.0 110.5C416.9 107.7 425.2 105.5 426.5 105.8C427.8 106.0 429.3 110.5 428.7 113.0C428.1 115.5 421.2 128.6 420.0 130.7C418.8 132.8 417.4 136.0 417.0 134.0C416.6 132.0 415.1 113.3 416.0 110.5Z" fill="#c6c6c6" stroke="#c6c6c6" stroke-width="0.6" stroke-linejoin="round" />
<path d="M408.0 154.5C409.3 153.8 407.3 163.5 407.0 167.5C406.7 171.5 405.8 192.3 404.9 194.6C404.0 196.8 400.3 191.0 398.4 190.0C396.4 189.0 385.8 186.5 385.4 184.9C385.0 183.3 391.7 177.0 394.0 174.0C396.3 171.0 406.7 155.2 408.0 154.5Z" fill="#c6c6c6" stroke="#c6c6c6" stroke-width="0.6" stroke-linejoin="round" />
<path d="M333.0 135.0C333.3 134.3 344.1 131.4 345.0 131.8C345.9 132.2 343.2 138.7 342.0 139.0C340.8 139.3 332.7 135.7 333.0 135.0Z" fill="#c6c6c6" stroke="#c6c6c6" stroke-width="0.6" stroke-linejoin="round" />
<path d="M342.0 102.5 L371.3 90.6" fill="none" stroke="#333333" stroke-width="0.96" stroke-linecap="round" stroke-linejoin="round"/>
<path d="M343.0 106.8C344.6 108.1 352.2 115.0 355.0 116.6C357.8 118.2 361.2 119.7 363.7 118.8C366.2 117.9 372.2 113.3 373.4 110.0C374.6 106.7 372.5 96.0 372.4 93.8" fill="none" stroke="#333333" stroke-width="1.08" stroke-linecap="round" stroke-linejoin="round"/>
<path d="M343.0 106.8 L332.3 110.0" fill="none" stroke="#333333" stroke-width="1.08" stroke-linecap="round" stroke-linejoin="round"/>
<path d="M372.0 91.0 L405.0 74.0" fill="none" stroke="#333333" stroke-width="0.96" stroke-linecap="round" stroke-linejoin="round"/>
<path d="M311.7 121.0 L331.0 112.0" fill="none" stroke="#333333" stroke-width="0.96" stroke-linecap="round" stroke-linejoin="round"/>
<path d="M311.7 121.0C311.8 121.5 311.9 124.5 312.8 126.0C313.7 127.5 318.7 135.3 320.3 136.0C321.9 136.7 328.1 133.1 329.0 132.8" fill="none" stroke="#333333" stroke-width="0.96" stroke-linecap="round" stroke-linejoin="round"/>
<path d="M350.7 101.4C352.2 100.5 355.8 97.9 359.0 96.5C362.2 95.1 366.4 94.3 368.0 93.8" fill="none" stroke="#333333" stroke-width="1.56" stroke-linecap="round" stroke-linejoin="round"/>
<path d="M358.5 96.0C359.1 95.5 365.9 93.8 366.5 94.0C367.1 94.2 365.6 97.5 365.0 98.0C364.4 98.5 360.6 99.2 360.0 99.0C359.4 98.8 357.9 96.5 358.5 96.0Z" fill="#444" stroke="#444" stroke-width="0.6" stroke-linejoin="round" />
<path d="M317.0 122.0C318.3 121.5 321.6 120.5 324.0 119.5C326.4 118.5 328.9 117.1 330.0 116.6" fill="none" stroke="#333333" stroke-width="1.44" stroke-linecap="round" stroke-linejoin="round"/>
<path d="M322.0 119.5C322.4 119.0 326.6 118.2 327.0 118.5C327.4 118.8 326.4 122.0 326.0 122.5C325.6 123.0 323.4 123.3 323.0 123.0C322.6 122.7 321.6 120.0 322.0 119.5Z" fill="#444" stroke="#444" stroke-width="0.6" stroke-linejoin="round" />
<path d="M331.0 113.0C330.8 115.0 330.4 120.2 330.0 124.0C329.6 127.8 327.8 131.6 329.0 134.0C330.2 136.4 333.9 136.1 336.6 137.0C339.4 137.9 342.6 138.6 344.0 139.0" fill="none" stroke="#333333" stroke-width="0.96" stroke-linecap="round" stroke-linejoin="round"/>
<path d="M342.0 153.4C344.0 152.2 349.2 148.2 352.8 147.0C356.4 145.8 358.7 147.6 361.5 147.0C364.3 146.4 366.8 144.3 368.0 143.7" fill="none" stroke="#333333" stroke-width="1.2" stroke-linecap="round" stroke-linejoin="round"/>
<path d="M342.0 153.4C342.4 153.8 341.6 156.0 344.0 155.6C346.4 155.2 353.0 151.8 355.0 151.0" fill="none" stroke="#333333" stroke-width="0.84" stroke-linecap="round" stroke-linejoin="round"/>
<path d="M354.0 158.9 L357.5 158.9" fill="none" stroke="#333333" stroke-width="0.96" stroke-linecap="round" stroke-linejoin="round"/>
<path d="M308.4 116.6C309.4 119.6 311.2 127.4 313.8 132.8C316.4 138.2 318.3 140.6 322.5 145.8C326.7 151.0 331.4 155.5 336.6 161.0C341.8 166.5 346.1 171.1 350.7 176.0C355.3 180.9 358.0 185.2 361.5 188.0C365.0 190.8 366.4 191.2 370.0 191.0C373.6 190.8 376.6 190.5 381.0 187.0C385.4 183.5 389.2 177.8 394.0 171.8C398.8 165.8 402.6 161.2 407.0 154.5C411.4 147.8 416.3 143.0 417.9 135.0C419.5 127.0 416.1 115.4 415.7 111.0" fill="none" stroke="#333333" stroke-width="1.08" stroke-linecap="round" stroke-linejoin="round"/>
<path d="M407.0 73.0C407.8 74.8 410.2 79.6 411.4 83.0C412.6 86.4 413.1 90.1 413.5 91.7" fill="none" stroke="#333333" stroke-width="0.72" stroke-linecap="round" stroke-linejoin="round"/>
<path d="M410.0 72.0C411.1 72.7 414.5 73.8 416.0 76.0C417.5 78.2 418.2 81.4 418.0 84.0C417.8 86.6 415.6 88.9 415.0 90.0" fill="none" stroke="#777" stroke-width="0.6" stroke-linecap="round" stroke-linejoin="round"/>
<path d="M404.0 192.0C405.5 193.5 409.1 196.7 412.0 200.0C414.9 203.3 417.1 205.6 420.0 210.0C422.9 214.4 426.5 221.4 428.0 224.0" fill="none" stroke="#333333" stroke-width="0.84" stroke-linecap="round" stroke-linejoin="round"/>
<path d="M416.0 216.0C415.3 218.9 418.6 226.1 412.0 232.0C405.4 237.9 388.6 242.5 380.0 248.0C371.4 253.5 369.0 254.3 365.0 262.0C361.0 269.7 359.3 284.9 358.0 290.0" fill="none" stroke="#333333" stroke-width="0.84" stroke-linecap="round" stroke-linejoin="round"/>
<path d="M428.0 224.0C428.9 227.8 430.8 238.0 433.0 245.0C435.2 252.0 438.7 258.9 440.0 262.0" fill="none" stroke="#333333" stroke-width="0.72" stroke-linecap="round" stroke-linejoin="round"/>
<path d="M412.0 232.0C412.7 234.6 414.5 240.5 416.0 246.0C417.5 251.5 419.3 259.1 420.0 262.0" fill="none" stroke="#333333" stroke-width="0.72" stroke-linecap="round" stroke-linejoin="round"/>
<path d="M422.0 256.0 L424.0 258.0" fill="none" stroke="#333333" stroke-width="1.2" stroke-linecap="round" stroke-linejoin="round"/>
<path d="M422.0 272.0 L424.0 275.0" fill="none" stroke="#333333" stroke-width="1.2" stroke-linecap="round" stroke-linejoin="round"/>
<path d="M428.0 224.0C430.2 217.8 435.6 203.6 440.0 190.0C444.4 176.4 448.3 162.0 452.0 150.0C455.7 138.0 458.5 129.3 460.0 124.7" fill="none" stroke="#333333" stroke-width="0.84" stroke-linecap="round" stroke-linejoin="round"/>
<path d="M460.0 90.0C461.2 92.0 466.2 96.3 466.7 100.7C467.2 105.1 461.2 107.7 462.7 114.0C464.2 120.3 472.5 131.4 474.7 135.3" fill="none" stroke="#333333" stroke-width="0.84" stroke-linecap="round" stroke-linejoin="round"/>
<path d="M466.7 100.7C469.1 102.2 475.1 104.8 480.0 108.7C484.9 112.6 490.9 119.6 493.3 122.0" fill="none" stroke="#333333" stroke-width="0.72" stroke-linecap="round" stroke-linejoin="round"/>
<path d="M504.0 115.3C506.4 113.8 511.4 108.5 517.3 107.3C523.2 106.1 532.6 108.4 536.0 108.7" fill="none" stroke="#333333" stroke-width="0.84" stroke-linecap="round" stroke-linejoin="round"/>
<path d="M504.0 115.3C501.1 118.0 493.4 126.3 488.0 130.0C482.6 133.7 477.1 134.3 474.7 135.3" fill="none" stroke="#333333" stroke-width="0.84" stroke-linecap="round" stroke-linejoin="round"/>
<path d="M474.7 135.3C474.7 138.2 475.7 143.5 474.7 151.3C473.7 159.1 471.8 167.7 469.3 178.0C466.8 188.3 464.2 196.1 461.3 207.3C458.4 218.5 455.9 229.3 453.3 239.3C450.7 249.3 448.2 257.8 447.0 262.0" fill="none" stroke="#333333" stroke-width="0.84" stroke-linecap="round" stroke-linejoin="round"/>
<path d="M460.0 124.7C459.3 129.6 458.7 141.0 456.0 151.3C453.3 161.6 448.2 172.4 445.3 180.7C442.4 189.0 441.0 193.8 440.0 196.7" fill="none" stroke="#333333" stroke-width="0.72" stroke-linecap="round" stroke-linejoin="round"/>
<path d="M488.0 130.0C490.4 132.4 495.9 140.1 501.3 143.3C506.7 146.5 511.9 144.4 517.3 147.3C522.7 150.2 526.0 155.1 530.7 159.3C535.4 163.5 540.5 168.0 542.7 170.0" fill="none" stroke="#333333" stroke-width="0.84" stroke-linecap="round" stroke-linejoin="round"/>
<path d="M477.3 156.7C478.5 161.3 481.5 172.7 484.0 182.0C486.5 191.3 489.5 202.7 490.7 207.3" fill="none" stroke="#333333" stroke-width="0.72" stroke-linecap="round" stroke-linejoin="round"/>
<path d="M504.0 167.3C505.5 170.0 509.1 176.6 512.0 182.0C514.9 187.4 518.5 194.0 520.0 196.7" fill="none" stroke="#333333" stroke-width="0.72" stroke-linecap="round" stroke-linejoin="round"/>
<path d="M510.7 172.7C512.4 176.8 516.8 187.2 520.0 195.0C523.2 202.8 526.5 211.6 528.0 215.3" fill="none" stroke="#333333" stroke-width="0.72" stroke-linecap="round" stroke-linejoin="round"/>
<path d="M524.0 178.0 L525.3 196.7" fill="none" stroke="#333333" stroke-width="0.72" stroke-linecap="round" stroke-linejoin="round"/>
<path d="M533.3 196.7 L537.3 207.3" fill="none" stroke="#333333" stroke-width="0.72" stroke-linecap="round" stroke-linejoin="round"/>
<path d="M472.0 178.0C473.5 181.4 476.6 189.9 480.0 196.7C483.4 203.5 488.7 211.9 490.7 215.3" fill="none" stroke="#333333" stroke-width="0.72" stroke-linecap="round" stroke-linejoin="round"/>
<path d="M466.7 212.7C469.6 215.6 475.9 223.3 482.7 228.7C489.5 234.1 500.1 239.6 504.0 242.0" fill="none" stroke="#333333" stroke-width="0.84" stroke-linecap="round" stroke-linejoin="round"/>
<path d="M504.0 242.0C506.9 238.1 513.2 227.1 520.0 220.7C526.8 214.3 532.5 211.7 541.3 207.3C550.1 202.9 563.1 198.6 568.0 196.7" fill="none" stroke="#333333" stroke-width="0.84" stroke-linecap="round" stroke-linejoin="round"/>
<path d="M541.3 220.7 L552.0 226.0" fill="none" stroke="#333333" stroke-width="0.72" stroke-linecap="round" stroke-linejoin="round"/>
<path d="M568.0 244.7 L594.7 239.3" fill="none" stroke="#333333" stroke-width="0.72" stroke-linecap="round" stroke-linejoin="round"/>
<path d="M548.0 262.0C549.5 258.0 551.6 246.6 556.0 240.0C560.4 233.4 569.1 228.6 572.0 226.0" fill="none" stroke="#333333" stroke-width="0.6" stroke-linecap="round" stroke-linejoin="round"/>
<path d="M566.0 36.0C559.4 36.8 561.6 42.4 560.0 44.0C558.4 45.6 552.0 50.4 550.0 52.5C548.0 54.6 541.5 62.2 540.0 65.0C538.5 67.8 535.6 77.0 535.0 80.0C534.4 83.0 533.8 92.2 534.0 95.0C534.2 97.8 536.4 105.2 537.5 107.5C538.6 109.8 543.9 117.2 545.0 117.5C546.1 117.8 548.9 112.0 549.0 110.0C549.1 108.0 546.1 100.0 546.0 97.5C545.9 95.0 546.9 87.2 547.5 85.0C548.1 82.8 551.0 76.5 552.5 75.0C554.0 73.5 561.0 69.8 562.5 70.0C564.0 70.2 566.2 76.1 567.5 77.5C568.8 78.9 573.0 83.2 575.0 84.0C577.0 84.8 585.0 84.7 587.5 85.0C590.0 85.3 597.5 87.6 600.0 87.5C602.5 87.4 610.0 85.0 612.5 84.0C615.0 83.0 623.0 78.4 625.0 77.5C627.0 76.6 631.0 74.8 632.5 75.0C634.0 75.2 638.9 78.2 640.0 80.0C641.1 81.8 643.8 89.8 644.0 92.5C644.2 95.2 642.1 105.2 642.5 107.5C642.9 109.8 646.5 114.5 647.5 115.0C648.5 115.5 652.2 114.5 652.5 112.5C652.8 110.5 650.5 98.5 650.0 95.0C649.5 91.5 648.2 80.8 647.5 77.5C646.8 74.2 643.8 65.2 642.5 62.5C641.2 59.8 636.2 51.9 635.0 50.0C633.8 48.1 630.9 45.4 630.0 44.0C629.1 42.6 632.4 36.8 626.0 36.0C619.6 35.2 572.6 35.2 566.0 36.0Z" fill="#555555" stroke="#555555" stroke-width="0.6" stroke-linejoin="round" />
<path d="M567.0 93.0C567.9 92.2 575.7 87.8 578.0 87.0C580.3 86.2 588.7 84.9 590.0 85.0C591.3 85.1 592.1 87.5 591.0 88.0C589.9 88.5 581.2 89.3 579.0 90.0C576.8 90.7 570.2 94.7 569.0 95.0C567.8 95.3 566.1 93.8 567.0 93.0Z" fill="#555555" stroke="#555555" stroke-width="0.6" stroke-linejoin="round" />
<path d="M550.0 110.0C550.9 109.5 553.2 108.2 555.0 107.5C556.8 106.8 559.1 106.3 560.0 106.0" fill="none" stroke="#333333" stroke-width="1.2" stroke-linecap="round" stroke-linejoin="round"/>
<path d="M634.0 113.0C634.8 112.0 641.0 111.5 642.0 112.0C643.0 112.5 644.4 116.7 644.0 118.0C643.6 119.3 639.0 124.6 638.0 125.0C637.0 125.4 634.4 123.2 634.0 122.0C633.6 120.8 633.2 114.0 634.0 113.0Z" fill="#c6c6c6" stroke="#c6c6c6" stroke-width="0.6" stroke-linejoin="round" />
<ellipse cx="586.5" cy="111" rx="6.5" ry="3.2" fill="#dcdcdc"/>
<ellipse cx="572" cy="125" rx="4.5" ry="3.2" fill="#dcdcdc"/>
<path d="M598.0 164.0C599.0 163.3 612.6 159.8 614.0 160.0C615.4 160.2 613.0 165.3 612.0 166.0C611.0 166.7 605.4 167.2 604.0 167.0C602.6 166.8 597.0 164.7 598.0 164.0Z" fill="#d0d0d0" stroke="#d0d0d0" stroke-width="0.6" stroke-linejoin="round" />
<path d="M632.0 86.0C632.3 84.7 636.4 83.4 637.0 84.0C637.6 84.6 638.3 90.7 638.0 92.0C637.7 93.3 634.6 97.6 634.0 97.0C633.4 96.4 631.7 87.3 632.0 86.0Z" fill="#d8d8d8" stroke="#d8d8d8" stroke-width="0.6" stroke-linejoin="round" />
<path d="M543.0 169.5C543.2 168.8 546.3 168.5 547.9 168.7C549.5 168.8 557.1 170.8 559.2 171.0C561.3 171.2 567.0 170.5 569.0 171.0C571.0 171.5 576.9 175.0 578.7 176.0C580.5 177.0 584.9 180.0 586.9 180.9C588.9 181.8 595.9 184.8 598.2 185.0C600.5 185.2 608.1 184.0 609.6 183.3C611.1 182.6 612.1 178.5 612.9 177.6C613.7 176.7 616.2 174.6 617.7 174.4C619.2 174.2 625.2 175.8 627.5 175.2C629.8 174.6 639.0 169.0 640.5 168.7C642.0 168.4 643.5 171.1 642.9 172.0C642.2 172.9 635.2 176.2 634.0 177.6C632.8 179.0 631.8 184.2 630.7 185.7C629.6 187.2 624.6 191.1 622.6 192.2C620.6 193.3 613.6 195.7 611.2 196.3C608.8 196.9 601.0 197.9 598.2 197.9C595.4 197.9 586.4 197.0 583.6 196.3C580.8 195.7 573.2 192.8 570.6 191.4C568.0 190.0 560.0 184.0 557.6 182.5C555.2 181.0 547.7 177.3 546.2 176.0C544.7 174.7 542.8 170.2 543.0 169.5Z" fill="#555555" stroke="#555555" stroke-width="0.6" stroke-linejoin="round" />
<path d="M571.0 103.0C572.7 102.2 594.1 90.9 596.0 91.0C597.9 91.1 599.8 102.3 599.0 104.0C598.2 105.7 585.5 116.4 584.0 117.0C582.5 117.6 576.9 113.9 576.0 113.0C575.1 112.1 571.3 103.7 571.0 103.0" fill="none" stroke="#333333" stroke-width="1.08" stroke-linecap="round" stroke-linejoin="round"/>
<path d="M570.0 100.0 L595.0 89.0" fill="none" stroke="#333333" stroke-width="0.84" stroke-linecap="round" stroke-linejoin="round"/>
<path d="M596.0 91.0 L630.0 77.5" fill="none" stroke="#333333" stroke-width="0.96" stroke-linecap="round" stroke-linejoin="round"/>
<path d="M544.0 124.0C545.2 123.3 560.5 112.6 562.0 113.0C563.5 113.4 567.3 128.5 567.0 130.0C566.7 131.5 558.1 135.9 557.0 136.0C555.9 136.1 550.9 132.8 550.0 132.0C549.1 131.2 544.4 124.5 544.0 124.0" fill="none" stroke="#333333" stroke-width="1.08" stroke-linecap="round" stroke-linejoin="round"/>
<path d="M562.0 113.0 L571.0 105.0" fill="none" stroke="#333333" stroke-width="0.96" stroke-linecap="round" stroke-linejoin="round"/>
<path d="M578.0 100.0C579.1 99.4 581.8 97.4 584.0 96.5C586.2 95.6 588.9 95.3 590.0 95.0" fill="none" stroke="#333333" stroke-width="1.32" stroke-linecap="round" stroke-linejoin="round"/>
<path d="M582.0 103.0C582.9 102.6 585.2 101.5 587.0 101.0C588.8 100.5 591.1 100.2 592.0 100.0" fill="none" stroke="#333333" stroke-width="0.72" stroke-linecap="round" stroke-linejoin="round"/>
<path d="M552.0 122.0C552.9 121.5 555.2 119.9 557.0 119.0C558.8 118.1 561.1 117.4 562.0 117.0" fill="none" stroke="#333333" stroke-width="1.32" stroke-linecap="round" stroke-linejoin="round"/>
<path d="M566.0 115.0C566.2 116.3 566.6 119.4 567.0 122.0C567.4 124.6 566.9 127.3 568.0 129.0C569.1 130.7 571.4 130.8 573.0 131.0C574.6 131.2 576.3 130.2 577.0 130.0" fill="none" stroke="#333333" stroke-width="0.96" stroke-linecap="round" stroke-linejoin="round"/>
<path d="M580.0 145.0C581.3 143.9 584.4 140.3 587.0 139.0C589.6 137.7 591.8 138.6 594.0 138.0C596.2 137.4 598.1 136.4 599.0 136.0" fill="none" stroke="#333333" stroke-width="1.2" stroke-linecap="round" stroke-linejoin="round"/>
<path d="M586.0 147.0 L589.0 147.0" fill="none" stroke="#333333" stroke-width="0.96" stroke-linecap="round" stroke-linejoin="round"/>
<path d="M548.0 113.0C549.1 116.1 550.7 124.3 554.0 130.0C557.3 135.7 561.2 139.2 566.0 144.0C570.8 148.8 574.5 151.8 580.0 156.0C585.5 160.2 590.5 166.3 596.0 167.0C601.5 167.7 605.2 163.5 610.0 160.0C614.8 156.5 618.0 152.0 622.0 148.0C626.0 144.0 630.2 139.8 632.0 138.0" fill="none" stroke="#333333" stroke-width="1.08" stroke-linecap="round" stroke-linejoin="round"/>
<path d="M629.0 81.0C629.9 80.5 631.6 77.5 634.0 78.0C636.4 78.5 640.7 81.1 642.0 84.0C643.3 86.9 642.1 91.1 641.0 94.0C639.9 96.9 636.9 98.9 636.0 100.0" fill="none" stroke="#333333" stroke-width="0.84" stroke-linecap="round" stroke-linejoin="round"/>
<path d="M608.0 113.0 L609.0 116.0" fill="none" stroke="#333333" stroke-width="1.2" stroke-linecap="round" stroke-linejoin="round"/>
<path d="M621.0 128.0 L622.0 131.0" fill="none" stroke="#333333" stroke-width="1.2" stroke-linecap="round" stroke-linejoin="round"/>
<path d="M626.0 150.0 L660.0 132.0" fill="none" stroke="#333333" stroke-width="0.72" stroke-linecap="round" stroke-linejoin="round"/>
<path d="M626.0 150.0C628.2 153.3 634.7 163.6 638.0 168.0C641.3 172.4 642.9 172.9 644.0 174.0" fill="none" stroke="#333333" stroke-width="0.72" stroke-linecap="round" stroke-linejoin="round"/>
<path d="M658.0 134.0C659.6 137.3 666.6 147.2 667.0 152.0C667.4 156.8 664.2 156.0 660.0 160.0C655.8 164.0 646.9 171.4 644.0 174.0" fill="none" stroke="#333333" stroke-width="0.72" stroke-linecap="round" stroke-linejoin="round"/>
<path d="M649.0 117.0 L655.0 133.0" fill="none" stroke="#333333" stroke-width="0.72" stroke-linecap="round" stroke-linejoin="round"/>
<path d="M677.0 98.0C677.0 96.2 676.3 91.1 677.0 88.0C677.7 84.9 677.3 82.0 681.0 81.0C684.7 80.0 692.0 83.4 697.0 82.7C702.0 82.0 703.0 77.0 708.0 77.0C713.0 77.0 718.7 83.1 724.0 82.7C729.3 82.3 730.2 78.1 737.0 74.7C743.8 71.3 754.0 67.4 761.0 64.0C768.0 60.6 772.4 57.5 775.0 56.0" fill="none" stroke="#333333" stroke-width="0.72" stroke-linecap="round" stroke-linejoin="round"/>
<path d="M677.0 88.0C680.7 89.5 690.4 92.3 697.0 96.0C703.6 99.7 707.1 106.5 713.0 108.0C718.9 109.5 721.7 105.3 729.0 104.0C736.3 102.7 747.5 101.0 753.0 101.0C758.5 101.0 757.9 103.5 759.0 104.0" fill="none" stroke="#333333" stroke-width="0.72" stroke-linecap="round" stroke-linejoin="round"/>
<path d="M764.0 62.7C763.1 66.4 759.7 75.7 759.0 82.7C758.3 89.7 759.8 97.6 760.0 101.0" fill="none" stroke="#333333" stroke-width="0.6" stroke-linecap="round" stroke-linejoin="round"/>
<path d="M759.0 104.0C756.4 106.0 748.5 109.8 745.0 114.7C741.5 119.6 742.4 126.3 740.0 130.7C737.6 135.1 734.4 135.8 732.0 138.7C729.6 141.6 728.6 143.3 727.0 146.7C725.4 150.1 724.3 150.0 723.0 157.0C721.7 164.0 720.5 179.9 720.0 185.0" fill="none" stroke="#333333" stroke-width="0.6" stroke-linecap="round" stroke-linejoin="round"/>
<path d="M667.0 154.7C670.1 155.1 673.7 156.8 684.0 157.0C694.3 157.2 715.9 156.2 723.0 156.0" fill="none" stroke="#333333" stroke-width="0.72" stroke-linecap="round" stroke-linejoin="round"/>
<path d="M580.0 243.0C583.7 240.6 589.0 233.0 600.0 230.0C611.0 227.0 630.3 225.2 640.0 226.7C649.7 228.2 640.7 235.9 653.0 238.0C665.3 240.1 694.7 236.4 707.0 238.0C719.3 239.6 715.2 242.7 720.0 246.7C724.8 250.7 728.8 253.3 733.0 260.0C737.2 266.7 739.9 283.0 743.0 283.0C746.1 283.0 748.2 267.9 750.0 260.0C751.8 252.1 749.9 245.5 753.0 240.0C756.1 234.5 763.0 234.9 767.0 230.0C771.0 225.1 773.5 216.1 775.0 213.0" fill="none" stroke="#333333" stroke-width="0.72" stroke-linecap="round" stroke-linejoin="round"/>
<path d="M740.0 286.7C738.2 291.0 733.7 298.4 730.0 310.0C726.3 321.6 721.8 342.7 720.0 350.0" fill="none" stroke="#333333" stroke-width="0.72" stroke-linecap="round" stroke-linejoin="round"/>
<path d="M627.0 233.0C626.6 239.2 625.9 256.2 625.0 266.7C624.1 277.1 622.5 285.7 622.0 290.0" fill="none" stroke="#333333" stroke-width="0.6" stroke-linecap="round" stroke-linejoin="round"/>
<path d="M622.0 312.0 L622.0 337.0" fill="none" stroke="#333333" stroke-width="0.6" stroke-linecap="round" stroke-linejoin="round"/>
<path d="M675.0 305.0C678.1 305.0 686.5 305.9 692.0 305.0C697.5 304.1 702.6 300.9 705.0 300.0" fill="none" stroke="#333333" stroke-width="0.84" stroke-linecap="round" stroke-linejoin="round"/>
<path d="M650.0 181.7 L677.0 190.0" fill="none" stroke="#333333" stroke-width="0.6" stroke-linecap="round" stroke-linejoin="round"/>
<path d="M657.0 193.0 L697.0 201.7" fill="none" stroke="#333333" stroke-width="0.6" stroke-linecap="round" stroke-linejoin="round"/>
<path d="M653.0 216.7C657.4 215.8 667.1 212.6 677.0 211.7C686.9 210.8 701.5 211.7 707.0 211.7" fill="none" stroke="#333333" stroke-width="0.6" stroke-linecap="round" stroke-linejoin="round"/>
<path d="M703.0 180.0C706.1 182.4 713.8 185.7 720.0 193.0C726.2 200.3 733.9 215.1 737.0 220.0" fill="none" stroke="#333333" stroke-width="0.6" stroke-linecap="round" stroke-linejoin="round"/>
<path d="M707.0 208.0C709.9 210.8 717.5 215.3 723.0 223.0C728.5 230.7 734.4 245.1 737.0 250.0" fill="none" stroke="#333333" stroke-width="0.6" stroke-linecap="round" stroke-linejoin="round"/>
<path d="M733.0 150.0 L735.0 186.7" fill="none" stroke="#333333" stroke-width="0.6" stroke-linecap="round" stroke-linejoin="round"/>
<path d="M752.0 150.0C752.2 156.1 752.5 170.8 753.0 183.0C753.5 195.2 754.6 210.5 755.0 216.7" fill="none" stroke="#333333" stroke-width="0.6" stroke-linecap="round" stroke-linejoin="round"/>
<path d="M773.0 176.7C770.6 182.2 763.7 198.8 760.0 206.7C756.3 214.6 754.3 217.6 753.0 220.0" fill="none" stroke="#333333" stroke-width="0.6" stroke-linecap="round" stroke-linejoin="round"/>
<path d="M745.0 114.0C744.5 120.6 742.0 134.2 742.0 150.0C742.0 165.8 744.5 190.8 745.0 200.0" fill="none" stroke="#333333" stroke-width="0.6" stroke-linecap="round" stroke-linejoin="round"/>
<path d="M616.7 196.7C616.4 199.1 613.8 206.3 615.0 210.0C616.2 213.7 621.8 215.5 623.3 216.7" fill="none" stroke="#333333" stroke-width="0.72" stroke-linecap="round" stroke-linejoin="round"/>
<path d="M633.3 193.3 L635.0 213.3" fill="none" stroke="#333333" stroke-width="0.72" stroke-linecap="round" stroke-linejoin="round"/>
<path d="M600.0 221.7 L616.7 216.7" fill="none" stroke="#333333" stroke-width="0.72" stroke-linecap="round" stroke-linejoin="round"/>
<path d="M668.3 230.0 L693.3 231.7" fill="none" stroke="#333333" stroke-width="0.72" stroke-linecap="round" stroke-linejoin="round"/>
<path d="M663.3 155.0C666.4 155.6 668.4 158.6 680.0 158.3C691.6 158.0 718.1 154.2 726.7 153.3" fill="none" stroke="#333333" stroke-width="0.72" stroke-linecap="round" stroke-linejoin="round"/>
<path d="M690.0 170.0 L696.7 176.7" fill="none" stroke="#333333" stroke-width="0.72" stroke-linecap="round" stroke-linejoin="round"/>
<path d="M723.3 166.7 L725.0 183.3" fill="none" stroke="#333333" stroke-width="0.72" stroke-linecap="round" stroke-linejoin="round"/>
<path d="M731.7 176.7 L733.3 196.7" fill="none" stroke="#333333" stroke-width="0.72" stroke-linecap="round" stroke-linejoin="round"/>
<path d="M743.3 183.3 L745.0 206.7" fill="none" stroke="#333333" stroke-width="0.72" stroke-linecap="round" stroke-linejoin="round"/>
<path d="M766.7 193.3 L756.7 220.0" fill="none" stroke="#333333" stroke-width="0.72" stroke-linecap="round" stroke-linejoin="round"/>
<path d="M733.3 250.0 L746.7 260.0" fill="none" stroke="#333333" stroke-width="0.72" stroke-linecap="round" stroke-linejoin="round"/>
<path d="M623.3 283.3C623.9 284.5 625.5 290.0 626.7 290.0C627.9 290.0 629.4 284.5 630.0 283.3" fill="none" stroke="#333333" stroke-width="0.72" stroke-linecap="round" stroke-linejoin="round"/>
<path d="M600.0 196.0C602.2 199.5 607.4 209.7 612.0 215.0C616.6 220.3 622.6 223.2 625.0 225.0" fill="none" stroke="#333333" stroke-width="0.6" stroke-linecap="round" stroke-linejoin="round"/>
<path d="M640.0 200.0 L690.0 212.0" fill="none" stroke="#333333" stroke-width="0.6" stroke-linecap="round" stroke-linejoin="round"/>
<path d="M407.5 325.0C407.8 320.5 411.0 308.8 412.5 305.0C414.0 301.2 420.0 290.8 422.5 287.5C425.0 284.2 434.2 275.0 437.5 272.5C440.8 270.0 451.2 264.0 455.0 262.5C458.8 261.0 471.0 258.2 475.0 257.5C479.0 256.8 491.2 255.5 495.0 255.5C498.8 255.5 509.0 256.8 512.5 257.5C516.0 258.2 526.8 261.0 530.0 262.5C533.2 264.0 542.5 270.2 545.0 272.5C547.5 274.8 553.2 282.2 555.0 285.0C556.8 287.8 560.8 297.0 562.5 300.0C564.2 303.0 571.1 312.2 572.5 315.0C573.9 317.8 575.9 325.5 576.0 327.5C576.1 329.5 575.1 334.0 574.0 335.0C572.9 336.0 566.6 336.4 565.0 337.5C563.4 338.6 558.5 345.5 557.5 346.0C556.5 346.5 554.5 343.9 555.0 342.5C555.5 341.1 563.0 333.8 562.5 332.5C562.0 331.2 552.5 331.0 550.0 330.0C547.5 329.0 540.0 324.5 537.5 322.5C535.0 320.5 527.2 312.2 525.0 310.0C522.8 307.8 516.5 301.2 515.0 300.0C513.5 298.8 511.0 297.5 510.0 297.5C509.0 297.5 506.1 300.1 505.0 300.0C503.9 299.9 500.2 296.0 499.0 296.0C497.8 296.0 494.1 299.1 492.5 300.0C490.9 300.9 484.2 303.5 482.5 305.0C480.8 306.5 476.1 313.0 475.0 315.0C473.9 317.0 471.2 323.0 471.0 325.0C470.8 327.0 472.6 332.5 472.5 335.0C472.4 337.5 470.8 347.2 470.0 350.0C469.2 352.8 465.8 360.7 465.0 362.5C464.2 364.3 462.6 366.8 462.5 368.0C462.4 369.2 463.4 373.6 464.0 375.0C464.6 376.4 468.3 380.6 469.0 382.5C469.7 384.4 471.1 392.6 471.0 394.0C470.9 395.4 468.6 396.6 467.5 396.0C466.4 395.4 461.2 388.9 460.0 387.5C458.8 386.1 456.5 383.2 455.0 382.5C453.5 381.8 446.8 379.8 445.0 380.0C443.2 380.2 438.2 383.5 437.5 385.0C436.8 386.5 437.1 393.0 437.5 395.0C437.9 397.0 440.1 403.0 441.0 405.0C441.9 407.0 445.7 413.2 446.0 415.0C446.3 416.8 444.7 421.6 444.0 422.5C443.3 423.4 439.8 425.0 439.0 424.0C438.2 423.0 436.9 415.1 436.0 412.5C435.1 409.9 431.4 400.5 430.0 397.5C428.6 394.5 424.0 385.8 422.5 382.5C421.0 379.2 416.2 368.2 415.0 365.0C413.8 361.8 410.8 354.0 410.0 350.0C409.2 346.0 407.2 329.5 407.5 325.0Z" fill="#555555" stroke="#555555" stroke-width="0.6" stroke-linejoin="round" />
<path d="M510.0 257.5C510.5 260.7 511.1 269.0 512.5 275.0C513.9 281.0 516.6 287.2 517.5 290.0" fill="none" stroke="#333333" stroke-width="0.84" stroke-linecap="round" stroke-linejoin="round"/>
<path d="M517.5 290.0C518.0 287.2 517.7 279.6 520.0 275.0C522.3 270.4 528.2 266.8 530.0 265.0" fill="none" stroke="#333333" stroke-width="0.84" stroke-linecap="round" stroke-linejoin="round"/>
<path d="M527.5 270.0C528.4 273.2 530.2 282.0 532.5 287.5C534.8 293.0 536.8 296.1 540.0 300.0C543.2 303.9 545.9 307.6 550.0 308.8C554.1 309.9 557.5 307.0 562.5 306.0C567.5 305.0 574.3 304.0 577.0 303.5" fill="none" stroke="#333333" stroke-width="0.84" stroke-linecap="round" stroke-linejoin="round"/>
<path d="M467.5 306.0C469.8 304.4 475.9 298.8 480.0 297.5C484.1 296.2 488.2 298.5 490.0 298.8" fill="none" stroke="#333333" stroke-width="0.84" stroke-linecap="round" stroke-linejoin="round"/>
<path d="M461.0 322.5 L472.5 312.5" fill="none" stroke="#333333" stroke-width="0.84" stroke-linecap="round" stroke-linejoin="round"/>
<path d="M499.0 296.0C499.2 295.1 498.4 291.9 500.0 291.0C501.6 290.1 505.5 290.1 507.5 291.0C509.5 291.9 510.4 295.1 511.0 296.0" fill="none" stroke="#333333" stroke-width="0.84" stroke-linecap="round" stroke-linejoin="round"/>
<path d="M545.0 301.0 L547.0 304.0" fill="none" stroke="#333333" stroke-width="1.2" stroke-linecap="round" stroke-linejoin="round"/>
<path d="M530.0 262.0C532.8 260.2 540.2 254.9 545.0 252.0C549.8 249.1 554.0 247.1 556.0 246.0" fill="none" stroke="#333333" stroke-width="0.72" stroke-linecap="round" stroke-linejoin="round"/>
<path d="M441.0 264.0C440.4 261.8 438.7 255.5 438.0 252.0C437.3 248.5 437.2 246.3 437.0 245.0" fill="none" stroke="#333333" stroke-width="0.72" stroke-linecap="round" stroke-linejoin="round"/>
<path d="M431.0 272.0 L429.0 258.0" fill="none" stroke="#333333" stroke-width="0.6" stroke-linecap="round" stroke-linejoin="round"/>
<circle cx="425" cy="275" r="1.2" fill="none" stroke="#444" stroke-width="0.6"/>
<path d="M490.3 358.4C490.5 357.8 494.4 354.4 496.8 354.0C499.2 353.6 511.2 353.8 514.0 354.0C516.8 354.2 523.2 355.2 525.0 356.0C526.8 356.8 531.7 361.2 531.5 361.7C531.3 362.2 525.0 360.8 522.8 360.6C520.6 360.4 512.6 359.6 509.8 359.5C507.0 359.4 496.6 359.6 494.7 359.5C492.8 359.4 490.1 358.9 490.3 358.4Z" fill="#555555" stroke="#555555" stroke-width="0.6" stroke-linejoin="round" />
<path d="M555.3 344.3C555.9 343.6 562.8 339.3 564.0 339.0C565.2 338.7 567.6 340.2 567.0 341.0C566.4 341.8 558.7 346.2 557.5 346.5C556.3 346.8 554.6 345.1 555.3 344.3Z" fill="#555555" stroke="#555555" stroke-width="0.6" stroke-linejoin="round" />
<path d="M451.0 419.0C452.5 418.6 464.6 419.4 467.5 421.0C470.4 422.6 479.5 433.4 480.0 435.0C480.5 436.6 474.5 438.0 472.5 437.5C470.5 437.0 462.0 431.2 460.0 430.0C458.0 428.8 453.4 426.1 452.5 425.0C451.6 423.9 449.5 419.4 451.0 419.0Z" fill="#c6c6c6" stroke="#c6c6c6" stroke-width="0.6" stroke-linejoin="round" />
<path d="M440.0 388.0C440.4 386.6 445.3 385.0 446.0 386.0C446.7 387.0 446.4 396.2 447.0 398.0C447.6 399.8 451.9 403.0 452.0 404.0C452.1 405.0 449.0 408.4 448.0 408.0C447.0 407.6 442.8 402.0 442.0 400.0C441.2 398.0 439.6 389.4 440.0 388.0Z" fill="#c6c6c6" stroke="#c6c6c6" stroke-width="0.6" stroke-linejoin="round" />
<path d="M525.0 457.0C525.6 456.3 535.4 458.1 535.8 459.0C536.2 459.9 530.4 465.9 529.3 465.7C528.2 465.5 524.4 457.7 525.0 457.0Z" fill="#c6c6c6" stroke="#c6c6c6" stroke-width="0.6" stroke-linejoin="round" />
<path d="M430.0 455.0C432.5 454.8 446.0 461.0 450.0 462.5C454.0 464.0 465.8 468.2 470.0 470.0C474.2 471.8 488.5 478.0 492.5 480.0C496.5 482.0 506.8 487.9 510.0 490.0C513.2 492.1 521.8 498.5 525.0 501.0C528.2 503.5 539.0 512.1 542.5 515.0C546.0 517.9 557.0 527.2 560.0 530.0C563.0 532.8 570.5 540.0 572.5 542.5C574.5 545.0 579.8 552.5 580.0 555.0C580.2 557.5 575.8 565.9 575.0 567.5C574.2 569.1 575.0 570.2 572.5 571.0C570.0 571.8 556.0 574.1 550.0 575.0C544.0 575.9 519.2 579.1 512.5 580.0C505.8 580.9 487.6 583.5 482.5 584.0C477.4 584.5 464.0 585.9 461.0 585.0C458.0 584.1 454.4 578.2 452.5 575.0C450.6 571.8 444.2 556.8 442.5 552.5C440.8 548.2 436.4 536.5 435.0 532.5C433.6 528.5 430.6 515.9 429.0 512.5C427.4 509.1 419.8 502.0 419.0 499.0C418.2 496.0 420.4 485.9 421.0 482.5C421.6 479.1 424.1 467.8 425.0 465.0C425.9 462.2 427.5 455.2 430.0 455.0Z" fill="#555555" stroke="#555555" stroke-width="0.6" stroke-linejoin="round" />
<path d="M494.7 366.0C496.7 365.7 532.6 360.6 534.8 360.6C537.0 360.7 538.0 365.7 538.0 367.0C538.0 368.3 537.4 385.2 535.8 386.6C534.2 388.0 508.6 394.5 506.6 394.0C504.6 393.5 496.4 377.2 495.8 375.8C495.2 374.4 494.8 366.5 494.7 366.0" fill="none" stroke="#333333" stroke-width="1.08" stroke-linecap="round" stroke-linejoin="round"/>
<path d="M496.0 368.5 L534.0 363.0" fill="none" stroke="#333333" stroke-width="0.72" stroke-linecap="round" stroke-linejoin="round"/>
<path d="M466.5 376.8 L494.7 373.6" fill="none" stroke="#333333" stroke-width="1.08" stroke-linecap="round" stroke-linejoin="round"/>
<path d="M467.0 379.0 L494.0 376.0" fill="none" stroke="#333333" stroke-width="0.6" stroke-linecap="round" stroke-linejoin="round"/>
<path d="M538.0 366.0 L551.0 358.4" fill="none" stroke="#333333" stroke-width="1.08" stroke-linecap="round" stroke-linejoin="round"/>
<path d="M551.0 358.4C552.1 358.0 571.5 350.1 572.7 350.8C573.9 351.5 575.3 371.2 574.8 372.5C574.3 373.8 562.9 376.2 561.8 375.8C560.7 375.4 553.5 364.7 553.0 363.8C552.5 362.9 551.1 358.7 551.0 358.4" fill="none" stroke="#333333" stroke-width="1.08" stroke-linecap="round" stroke-linejoin="round"/>
<path d="M503.3 375.8C504.9 375.0 508.4 372.4 512.0 371.4C515.6 370.4 520.8 370.5 522.8 370.3" fill="none" stroke="#333333" stroke-width="1.56" stroke-linecap="round" stroke-linejoin="round"/>
<ellipse cx="511.5" cy="373" rx="2.6" ry="1.8" fill="#444"/>
<path d="M514.0 378.0 L518.5 377.0" fill="none" stroke="#333333" stroke-width="0.72" stroke-linecap="round" stroke-linejoin="round"/>
<path d="M556.4 358.4C557.2 358.1 559.2 356.9 561.0 356.5C562.8 356.1 565.1 356.1 566.0 356.0" fill="none" stroke="#333333" stroke-width="1.44" stroke-linecap="round" stroke-linejoin="round"/>
<ellipse cx="561" cy="358.6" rx="2.2" ry="1.5" fill="#444"/>
<path d="M564.0 376.8C564.6 378.8 567.3 383.9 567.3 387.7C567.3 391.5 565.6 394.6 564.0 397.4C562.4 400.2 560.0 402.6 558.6 402.8C557.2 403.0 556.8 399.3 556.4 398.5" fill="none" stroke="#333333" stroke-width="1.08" stroke-linecap="round" stroke-linejoin="round"/>
<path d="M544.5 399.6C545.1 399.2 546.8 397.9 548.0 397.5C549.2 397.1 550.5 397.4 551.0 397.4" fill="none" stroke="#333333" stroke-width="1.08" stroke-linecap="round" stroke-linejoin="round"/>
<path d="M538.0 424.5C539.6 423.7 543.5 421.0 546.7 420.0C549.9 419.0 552.5 420.0 555.3 419.0C558.1 418.0 559.6 415.8 561.8 414.8C564.0 413.8 566.3 413.9 567.3 413.7" fill="none" stroke="#333333" stroke-width="1.2" stroke-linecap="round" stroke-linejoin="round"/>
<path d="M557.5 425.6 L563.0 424.5" fill="none" stroke="#333333" stroke-width="1.08" stroke-linecap="round" stroke-linejoin="round"/>
<path d="M573.8 344.0C573.6 349.2 572.7 361.3 572.7 372.5C572.7 383.7 573.8 393.9 573.8 405.0C573.8 416.1 573.7 424.7 572.7 433.0C571.7 441.3 570.7 445.7 568.3 450.5C565.9 455.3 564.5 457.4 559.7 459.0C554.9 460.6 548.7 460.2 542.3 459.0C535.9 457.8 532.1 455.9 525.0 452.7C517.9 449.5 510.4 445.4 503.3 441.8C496.2 438.2 491.6 436.6 486.0 433.0C480.4 429.4 476.6 425.5 473.0 422.0C469.4 418.5 467.7 415.2 466.5 413.7" fill="none" stroke="#333333" stroke-width="1.08" stroke-linecap="round" stroke-linejoin="round"/>
<path d="M421.0 494.0C425.4 497.1 435.1 505.8 445.0 511.0C454.9 516.2 464.0 517.6 475.0 522.5C486.0 527.4 494.9 532.0 505.0 537.5C515.1 543.0 521.3 547.0 530.0 552.5C538.7 558.0 548.4 564.8 552.5 567.5" fill="none" stroke="#2e2e2e" stroke-width="0.96" stroke-linecap="round" stroke-linejoin="round"/>
<path d="M443.0 510.0C444.6 510.9 448.9 513.7 452.0 515.0C455.1 516.3 458.5 516.6 460.0 517.0" fill="none" stroke="#2e2e2e" stroke-width="0.84" stroke-linecap="round" stroke-linejoin="round"/>
<path d="M444.0 422.0C443.3 426.2 442.4 438.9 440.0 445.0C437.6 451.1 432.6 453.2 431.0 455.0" fill="none" stroke="#333333" stroke-width="0.72" stroke-linecap="round" stroke-linejoin="round"/>
<path d="M440.0 445.0C445.5 447.4 457.2 451.9 470.0 458.0C482.8 464.1 498.1 471.8 510.0 478.0C521.9 484.2 529.3 484.3 535.0 492.0C540.7 499.7 539.9 514.9 541.0 520.0" fill="none" stroke="#333333" stroke-width="0.72" stroke-linecap="round" stroke-linejoin="round"/>
<path d="M527.0 460.0C527.5 463.3 528.5 472.1 530.0 478.0C531.5 483.9 533.2 488.3 535.0 492.0C536.8 495.7 538.5 494.3 540.0 498.0C541.5 501.7 542.5 509.4 543.0 512.0" fill="none" stroke="#333333" stroke-width="0.72" stroke-linecap="round" stroke-linejoin="round"/>
<path d="M540.0 498.0C543.7 503.9 551.9 518.6 560.0 530.0C568.1 541.4 579.6 554.5 584.0 560.0" fill="none" stroke="#333333" stroke-width="0.6" stroke-linecap="round" stroke-linejoin="round"/>
<path d="M437.5 385.0C438.0 387.8 438.3 395.1 440.0 400.0C441.7 404.9 445.7 409.8 447.0 412.0" fill="none" stroke="#333333" stroke-width="0.72" stroke-linecap="round" stroke-linejoin="round"/>
<path d="M525.0 452.0C525.3 451.3 531.6 454.0 532.0 455.0C532.4 456.0 529.7 462.3 529.0 462.0C528.3 461.7 524.7 452.7 525.0 452.0Z" fill="#c6c6c6" stroke="#c6c6c6" stroke-width="0.6" stroke-linejoin="round" />
<path d="M520.0 478.0C520.1 477.1 525.5 475.3 526.0 476.0C526.5 476.7 525.6 484.8 525.0 485.0C524.4 485.2 519.9 478.9 520.0 478.0Z" fill="#c6c6c6" stroke="#c6c6c6" stroke-width="0.6" stroke-linejoin="round" />
</g>

</svg>
<div id="topbar">
 <div id="gallery">ギャラリー</div>
 <div class="circ" style="left:91px"></div>
 <div class="circ" style="left:134px"></div>
 <div class="circ" style="left:176px"></div>
 <div class="circ" style="left:219px"></div>
 <svg class="ico" width="800" height="32" viewBox="0 0 800 32">
 <!--ICONS-->
 <g fill="#bdbdbd" stroke="none">
  <!-- wrench -->
  <g transform="translate(104.6,14) rotate(45)">
   <rect x="-1.6" y="0" width="3.2" height="11.6" rx="1.5"/>
   <circle cx="0" cy="-0.6" r="4.1"/>
   <path d="M-1.5 -6 L1.5 -6 L1.5 -1.6 A1.5 1.5 0 0 1 -1.5 -1.6 Z" fill="#171717"/>
  </g>
  <!-- wand -->
  <g transform="translate(146.2,17.8) rotate(45)">
   <rect x="-1.35" y="-6.2" width="2.7" height="3.3" rx="0.9"/>
   <rect x="-1.35" y="-2.3" width="2.7" height="8.6" rx="0.9"/>
  </g>
  <path d="M142.6 10.6 L143.2 12.9 L145.5 13.5 L143.2 14.1 L142.6 16.4 L142 14.1 L139.7 13.5 L142 12.9 Z"/>
  <circle cx="147.2" cy="11.2" r="0.8"/>
  <!-- S -->
  <path d="M187.3 10.6 L194.4 10.6 L193.8 12.5 L189.2 12.5 L191 19.6 L190.4 21.9 L182.6 21.9 L183.2 20 L188.3 20 L186.5 12.9 Z"/>
  <!-- arrow -->
  <path d="M237.4 10.2 L228.6 14.2 L231.3 15.7 L225.6 21.3 L226.7 22.4 L232.4 16.8 L233.8 19.5 Z"/>
 </g>
 <g fill="#cdcdcd">
  <!-- brush -->
  <path d="M585.6 7.2 L586.2 7.8 L574.6 20 L572.8 18.2 Z"/>
  <path d="M572.4 19.4 C573.8 20.4 573.4 22.4 571.2 24 C569 25.6 566 26.2 564.6 25.8 C566 24.8 566.2 22.8 567.8 21.2 C569.2 19.8 571.2 18.8 572.4 19.4 Z"/>
  <!-- smudge -->
  <path d="M629.6 7.3 L632.8 7 C634.8 8.6 636 10.6 636 12.4 C636 15.2 634.8 17.8 632.6 19.8 C631 21.4 629 22.6 626.6 22.8 L629.4 19 L621 19 C620 16 620.6 13.4 622 12 C623.6 10.6 626 10.2 628 9.8 Z"/>
  <path d="M625.6 16 L620.2 23.8" stroke="#cdcdcd" stroke-width="4.4" stroke-linecap="round" fill="none"/>
  <path d="M629.5 18.4 L627 21.8" stroke="#1d1d1d" stroke-width="1" stroke-linecap="round" fill="none"/>
  <!-- layers -->
  <path d="M728.2 7.3 h9.2 a2 2 0 0 1 2 2 v9 a2 2 0 0 1 -2 2 h-1.2 v-7.4 a2.6 2.6 0 0 0 -2.6 -2.6 h-7.4 v-1 a2 2 0 0 1 2 -2 Z"/>
  <rect x="721.2" y="11.7" width="13.6" height="13.4" rx="2.2"/>
 </g>
 <!-- eraser -->
 <g transform="translate(678.6,16.3) rotate(-43)">
  <rect x="-9.8" y="-4" width="19.6" height="8" rx="1.7" fill="#0a7aff"/>
  <rect x="-5.4" y="-4.1" width="1" height="8.2" fill="#1d1d1d"/>
 </g>
 <circle cx="782.4" cy="16.3" r="11" fill="#575757" stroke="#6b6b6b" stroke-width="0.9"/>

 </svg>
</div>
<div id="side">
 <div class="track" style="top:3px;height:125.5px"></div>
 <div class="knob" style="top:85.5px"></div>
 <div class="track" style="top:188.5px;height:127.5px"></div>
 <div class="knob" style="top:205.5px"></div>
</div>
<div id="sq"></div>
<svg style="position:absolute;left:0;top:380px" width="32" height="70" viewBox="0 380 32 70">
<!--UNDO-->
<g fill="none" stroke="#3c3c3c" stroke-width="1.5" stroke-linecap="round" stroke-linejoin="round">
 <path d="M12.5 396.2 L9.5 399 L12.5 401.8 M9.8 399 H17.6 A3 3 0 0 1 17.6 405.4 H12"/>
 <path d="M17.5 425.2 L20.5 428 L17.5 430.8 M20.2 428 H12.4 A3 3 0 0 0 12.4 434.4 H18"/>
</g>

</svg>
</body>
</html>
